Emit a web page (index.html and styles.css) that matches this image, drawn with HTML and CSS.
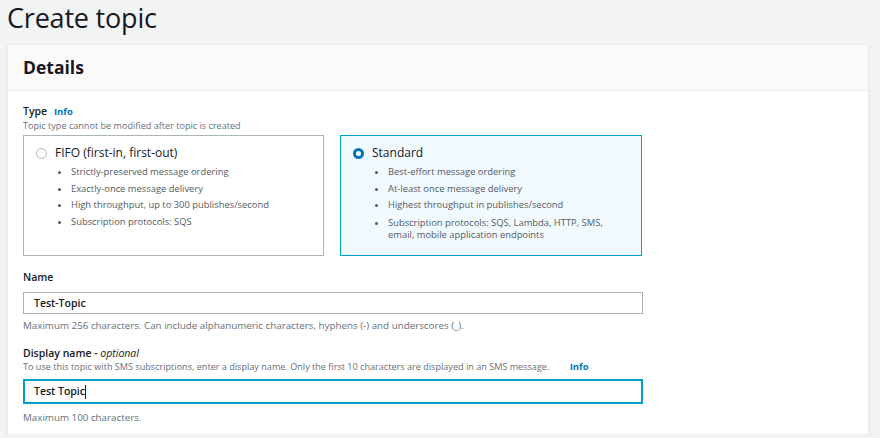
FILE: index.html
```html
<!DOCTYPE html>
<html lang="en">
<head>
  <meta charset="UTF-8">
  <meta name="viewport" content="width=device-width, initial-scale=1.0">
  <title>Create topic</title>
  <link rel="stylesheet" href="styles.css">
</head>
<body>
  <div class="page">
    <h1 class="page-title">Create topic</h1>

    <!-- Details card -->
    <div class="card">
      <div class="card-header">Details</div>
      <div class="card-body">

        <div class="field">
          <div class="label">Type <a class="info" href="#">Info</a></div>
          <div class="desc">Topic type cannot be modified after topic is created</div>
          <div class="tiles">
            <label class="tile">
              <div class="tile-head">
                <span class="radio"></span>
                <span>FIFO (first-in, first-out)</span>
              </div>
              <ul>
                <li>Strictly-preserved message ordering</li>
                <li>Exactly-once message delivery</li>
                <li>High throughput, up to 300 publishes/second</li>
                <li>Subscription protocols: SQS</li>
              </ul>
            </label>
            <label class="tile selected">
              <div class="tile-head">
                <span class="radio checked"></span>
                <span>Standard</span>
              </div>
              <ul>
                <li>Best-effort message ordering</li>
                <li>At-least once message delivery</li>
                <li>Highest throughput in publishes/second</li>
                <li>Subscription protocols: SQS, Lambda, HTTP, SMS, email, mobile application endpoints</li>
              </ul>
            </label>
          </div>
        </div>

        <div class="field">
          <div class="label">Name</div>
          <div class="input">Test-Topic</div>
          <div class="hint">Maximum 256 characters. Can include alphanumeric characters, hyphens (-) and underscores (_).</div>
        </div>

        <div class="field">
          <div class="label">Display name - <i>optional</i></div>
          <div class="desc">To use this topic with SMS subscriptions, enter a display name. Only the first 10 characters are displayed in an SMS message. <a class="info" href="#">Info</a></div>
          <div class="input focused">Test Topic<span class="caret"></span></div>
          <div class="hint">Maximum 100 characters.</div>
        </div>

      </div>
    </div>
  </div>
</body>
</html>
```

FILE: styles.css
```css
html, body {
  margin: 0;
  padding: 0;
  background: #f2f3f3;
  font-family: "Open Sans", Roboto, "Liberation Sans", sans-serif;
  color: #16191f;
}
* {
  box-sizing: border-box;
}
.page {
  padding: 0 11px 0 7px;
}
.page-title {
  margin: 0;
  padding: 0;
  height: 44px;
  font-size: 27px;
  font-weight: 400;
  line-height: 36px;
  letter-spacing: -0.2px;
}
.card {
  background: #fff;
  border: 1px solid #eaeded;
  box-shadow: 0 1px 1px rgba(0, 28, 36, 0.2);
}
.card-header {
  background: #fafafa;
  border-bottom: 1px solid #eaeded;
  height: 46px;
  line-height: 45px;
  padding: 0 15px;
  font-size: 17.5px;
  font-weight: 700;
}
.card-body {
  padding: 13px 15px 10px;
  max-width: 650px;
}
.field + .field {
  margin-top: 14px;
}
.label {
  font-size: 10.5px;
  line-height: 14px;
  font-weight: 600;
}
.label i {
  font-weight: 400;
}
.info {
  color: #0073bb;
  font-size: 9.5px;
  font-weight: 700;
  text-decoration: none;
  margin-left: 4px;
}
.desc {
  font-size: 9.1px;
  line-height: 13px;
  color: #687078;
}
.desc .info {
  margin-left: 18px;
}
.tiles {
  display: grid;
  grid-template-columns: 301px 302px;
  gap: 16px;
  margin-top: 3px;
}
.tile {
  display: block;
  border: 1px solid #aab7b8;
  height: 121px;
  padding: 9px 12px;
}
.tile.selected {
  background: #f1faff;
  border-color: #00a1c9;
}
.tile-head {
  display: flex;
  align-items: center;
  gap: 8px;
  font-size: 12px;
  line-height: 16px;
}
.radio {
  width: 11px;
  height: 11px;
  border: 1px solid #aab7b8;
  border-radius: 50%;
  background: #fff;
}
.radio.checked {
  border: 3.5px solid #0073bb;
}
.tile ul {
  margin: 3px 0 0;
  padding: 0 0 0 35px;
  font-size: 9.4px;
  line-height: 16.5px;
  color: #545b64;
}
.tile.selected ul li:last-child {
  line-height: 12px;
  padding-top: 3px;
}
.input {
  margin-top: 8px;
  height: 22px;
  border: 1px solid #aab7b8;
  padding: 0 10px;
  font-size: 10.5px;
  line-height: 20px;
  font-weight: 600;
}
.input.focused {
  height: 25px;
  line-height: 21px;
  border: 2px solid #00a1c9;
  padding: 0 9px;
  margin-top: 6px;
}
.caret {
  display: inline-block;
  width: 1px;
  height: 14px;
  background: #16191f;
  vertical-align: middle;
}
.hint {
  margin-top: 6px;
  font-size: 9.8px;
  line-height: 12px;
  color: #687078;
}
.focused + .hint {
  margin-top: 8px;
}
```
